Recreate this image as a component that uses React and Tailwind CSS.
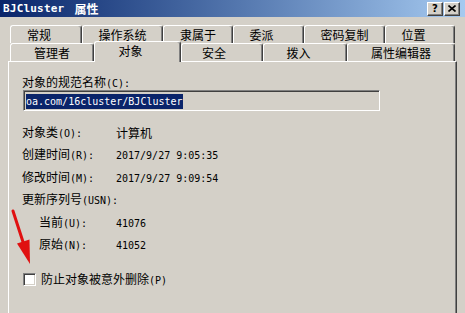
const CJK = /([\u3000-\u9fff\uff00-\uffef]+)/;

// splits a label into CJK runs (12px) and latin runs (10px mono, like SimSun's half-width glyphs)
function T({ children, className = "" }) {
  const parts = String(children).split(CJK).filter(Boolean);
  return (
    <span className={"whitespace-pre " + className}>
      {parts.map((p, i) =>
        CJK.test(p) ? (
          <span key={i} className="font-['Noto_Sans_CJK_SC',sans-serif] text-[12px]">
            {p}
          </span>
        ) : (
          <span key={i} className="font-['DejaVu_Sans_Mono',monospace] text-[10px]">
            {p}
          </span>
        )
      )}
    </span>
  );
}

const backTabs = [
  { label: "常规", w: "w-[72px]", pad: "pr-[14px]" },
  { label: "操作系统", w: "w-[81px]", pad: "" },
  { label: "隶属于", w: "w-[70px]", pad: "" },
  { label: "委派", w: "w-[71px]", pad: "pr-[14px]" },
  { label: "密码复制", w: "w-[81px]", pad: "" },
  { label: "位置", w: "w-[70px]", pad: "pr-[13px]" },
];

const frontTabs = [
  { label: "管理者", w: "w-[84px]", pad: "" },
  { label: "对象", w: "w-[87px]", pad: "pr-[14px]", selected: true },
  { label: "安全", w: "w-[82px]", pad: "pr-[16px]" },
  { label: "拨入", w: "w-[84px]", pad: "pr-[13px]" },
  { label: "属性编辑器", w: "w-[108px]", pad: "" },
];

const tabBase =
  "flex justify-center bg-[#d4d0c8] border-t border-l border-r border-white border-r-[#404040] rounded-t-[3px] shadow-[inset_-1px_0_#808080] leading-[14px] text-black";

function Tab({ tab }) {
  if (tab.selected) {
    return (
      <div className={`${tabBase} ${tab.w} ${tab.pad} relative z-10 h-[21px] -mb-px items-start pt-[1px]`}>
        <T>{tab.label}</T>
      </div>
    );
  }
  return (
    <div className={`${tabBase} ${tab.w} ${tab.pad} h-[18px] items-center`}>
      <T>{tab.label}</T>
    </div>
  );
}

function Row({ label, value, indent }) {
  return (
    <div className={`flex items-center ${indent ? "pl-[17px]" : ""} ${value.h}`}>
      <div className={indent ? "w-[77px]" : "w-[94px]"}>
        <T>{label}</T>
      </div>
      <T>{value.text}</T>
    </div>
  );
}

const raised =
  "bg-[#d4d0c8] border border-white border-r-[#404040] border-b-[#404040] shadow-[inset_-1px_-1px_#808080]";

export default function App() {
  return (
    <div className="relative w-[465px] h-[313px] overflow-hidden bg-[#d4d0c8] text-black leading-[14px]">
      {/* Title bar */}
      <div className="flex items-center h-[17px] pl-[3px] pr-[5px] bg-linear-to-r from-[#0a246a] to-[#a6caf0] text-white">
        <span className="font-['DejaVu_Sans_Mono',monospace] text-[11px] font-bold tracking-[0.2px]">BJCluster</span>
        <span className="ml-[10px] font-['Noto_Sans_CJK_SC',sans-serif] text-[12px] font-bold">属性</span>
        <div className="ml-auto flex gap-[1px]">
          <div className={`${raised} w-[16px] h-[14px] flex items-center justify-center`}>
            <span className="font-['DejaVu_Sans',sans-serif] text-[10px] font-bold text-black leading-none">?</span>
          </div>
          <div className={`${raised} w-[16px] h-[14px] flex items-center justify-center`}>
            <svg width="8" height="7" viewBox="0 0 8 7">
              <path d="M0.5 0.5 L7.5 6.5 M7.5 0.5 L0.5 6.5" stroke="#000" strokeWidth="1.6" />
            </svg>
          </div>
        </div>
      </div>

      {/* Tabs */}
      <div className="mt-[8px] pl-[10px]">
        <div className="flex h-[18px]">
          {backTabs.map((t) => (
            <Tab key={t.label} tab={t} />
          ))}
        </div>
        <div className="flex items-end h-[18px]">
          {frontTabs.map((t) => (
            <Tab key={t.label} tab={t} />
          ))}
        </div>
      </div>

      {/* Panel */}
      <div className="ml-[8px] w-[449px] h-[270px] border border-white border-r-[#404040] border-b-[#404040] shadow-[inset_-1px_-1px_#808080] pl-[13px] pt-[12px]">
        <div className="h-[14px]">
          <T>对象的规范名称(C):</T>
        </div>
        <div className="mt-[2px] ml-[1px] w-[357px] h-[21px] border border-[#808080] border-r-white border-b-white shadow-[inset_1px_1px_#404040,inset_-1px_-1px_#d4d0c8] pl-[2px] pt-[1px]">
          <span className="inline-block bg-[#0a246a] text-white leading-[15px] font-['DejaVu_Sans_Mono',monospace] text-[10px]">
            oa.com/16cluster/BJCluster
          </span>
        </div>

        <div className="mt-[10px]">
          <Row label="对象类(O):" value={{ text: "计算机", h: "h-[22px]" }} />
          <Row label="创建时间(R):" value={{ text: "2017/9/27 9:05:35", h: "h-[23px]" }} />
          <Row label="修改时间(M):" value={{ text: "2017/9/27 9:09:54", h: "h-[22px]" }} />
          <div className="flex items-center h-[23px]">
            <T>更新序列号(USN):</T>
          </div>
          <Row indent label="当前(U):" value={{ text: "41076", h: "h-[22px]" }} />
          <Row indent label="原始(N):" value={{ text: "41052", h: "h-[23px]" }} />
        </div>

        <div className="mt-[12px] h-[22px] flex items-center">
          <div className="ml-[1px] w-[13px] h-[13px] bg-white border border-[#808080] border-r-white border-b-white shadow-[inset_1px_1px_#404040,inset_-1px_-1px_#d4d0c8]" />
          <T className="ml-[5px]">防止对象被意外删除(P)</T>
        </div>
      </div>

      {/* Red annotation arrow */}
      <svg className="absolute inset-0 pointer-events-none" width="465" height="313">
        <line x1="13" y1="211" x2="24" y2="245" stroke="#e01010" strokeWidth="3" strokeLinecap="round" />
        <polygon points="30,264 29.5,239.5 17,243.5" fill="#e01010" />
      </svg>
    </div>
  );
}
